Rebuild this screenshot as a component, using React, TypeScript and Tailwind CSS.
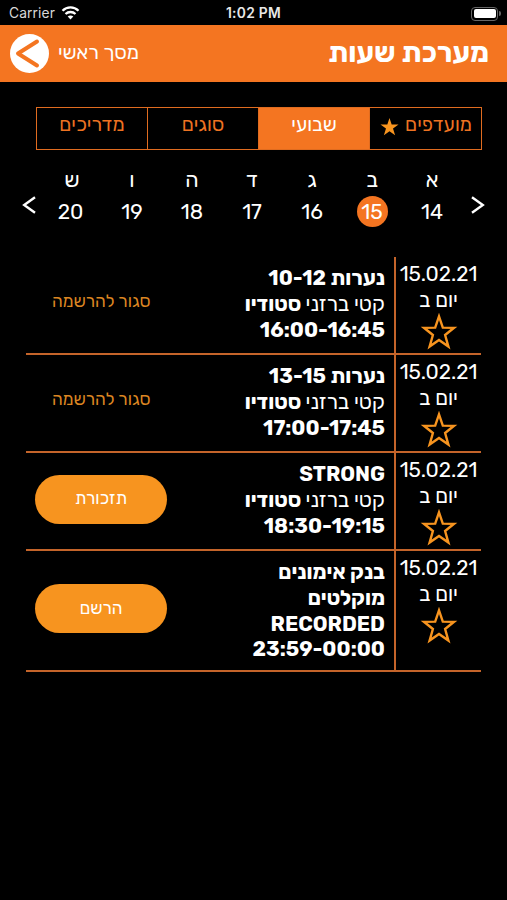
import React from "react";

const days = [
  ["א", "14"],
  ["ב", "15"],
  ["ג", "16"],
  ["ד", "17"],
  ["ה", "18"],
  ["ו", "19"],
  ["ש", "20"],
];

type Lesson = {
  title: string[];
  trainer: boolean;
  time: string;
  height: string;
  action: "closed" | "remind" | "join";
};

const lessons: Lesson[] = [
  { title: ["נערות 10-12"], trainer: true, time: "16:00-16:45", height: "h-[98px]", action: "closed" },
  { title: ["נערות 13-15"], trainer: true, time: "17:00-17:45", height: "h-[98px]", action: "closed" },
  { title: ["STRONG"], trainer: true, time: "18:30-19:15", height: "h-[98px]", action: "remind" },
  {
    title: ["בנק אימונים", "מוקלטים", "RECORDED"],
    trainer: false,
    time: "23:59-00:00",
    height: "h-[121px]",
    action: "join",
  },
];

function OutlineStar() {
  return (
    <svg width="38" height="38" viewBox="0 0 38 38" fill="none" className="mt-[1px]">
      <path
        d="M19 3.4 L22.8 14.6 L34 14.8 L25.1 22 L28.4 33.6 L19 27 L9.6 33.6 L12.9 22 L4 14.8 L15.2 14.6 Z"
        stroke="#f7941f"
        strokeWidth="2.4"
      />
    </svg>
  );
}

function Chevron({ flip }: { flip?: boolean }) {
  return (
    <svg width="14" height="18" viewBox="0 0 14 18" fill="none" className={flip ? "-scale-x-100" : ""}>
      <path d="M13 1.2 L2.2 9 L13 16.8" stroke="#fff" strokeWidth="2.4" />
    </svg>
  );
}

function Row({ lesson }: { lesson: Lesson }) {
  return (
    <div className={`flex border-b-2 border-[#c4642a] ${lesson.height}`}>
      <div className="flex w-[85px] shrink-0 flex-col items-center pt-[4px] text-[20.8px] text-white">
        <div dir="ltr" className="h-[26px] leading-[26px]">15.02.21</div>
        <div className="h-[25px] text-[20.8px] leading-[26px]">יום ב</div>
        <OutlineStar />
      </div>
      <div className="-mb-[2px] w-[2px] shrink-0 bg-[#c4642a]" />
      <div className="flex w-[168px] shrink-0 flex-col items-start pt-[9px] pr-[9px] text-[20.8px] leading-[25.8px] font-bold whitespace-nowrap text-white">
        {lesson.title.map((t) => (
          <div key={t}>{t}</div>
        ))}
        {lesson.trainer && (
          <div>
            <span className="font-normal">קטי ברזני</span> סטודיו
          </div>
        )}
        <div dir="ltr">{lesson.time}</div>
      </div>
      <div className="flex flex-1 items-center justify-end pb-[4px]">
        {lesson.action === "closed" ? (
          <div className="ml-[26px] pb-[3px] text-[17.3px] whitespace-nowrap text-[#dc8622]">סגור להרשמה</div>
        ) : (
          <button className="ml-[9px] flex h-[49px] w-[132px] items-center justify-center rounded-full bg-[#f7941f] text-[17.2px] text-white">
            {lesson.action === "remind" ? "תזכורת" : "הרשם"}
          </button>
        )}
      </div>
    </div>
  );
}

export default function App() {
  return (
    <div dir="rtl" className="h-[900px] w-[507px] overflow-hidden bg-black font-['Rubik','Open_Sans','Liberation_Sans',sans-serif]">
      <div dir="ltr" className="grid h-[25px] grid-cols-3 items-center pt-[2px] font-['Inter',sans-serif] text-[13.8px] leading-none text-[#d8d8d8]">
        <div className="flex items-center gap-[6px] pt-[1px] pl-[9px]">
          <span className="tracking-[0.1px]">Carrier</span>
          <svg width="19" height="14" viewBox="0 0 18 14" fill="none" stroke="#fff" strokeWidth="2.3" className="-mt-[2px]">
            <path d="M1 4.8 C5.5 0.3 12.5 0.3 17 4.8" />
            <path d="M4 8 C6.8 5.3 11.2 5.3 14 8" />
            <path d="M9 13.5 L6.2 10.6 C7.8 9.2 10.2 9.2 11.8 10.6 Z" fill="#fff" stroke="none" />
          </svg>
        </div>
        <div className="pt-[1px] text-center font-semibold tracking-[0.3px] text-[#e8e8e8]">1:02 PM</div>
        <div className="flex items-center justify-end pr-[6px]">
          <div className="h-[14px] w-[27px] rounded-[4px] border border-[#666] p-[1.5px]">
            <div className="h-full rounded-[2px] bg-white" />
          </div>
          <div className="ml-[1px] h-[5px] w-[2px] rounded-r-full bg-[#666]" />
        </div>
      </div>

      <header className="flex h-[57px] items-center justify-between bg-[#f47521] pr-[18px] pl-[10px] text-white">
        <h1 className="text-[28.2px] leading-none font-bold">מערכת שעות</h1>
        <div className="flex items-center gap-[9px]">
          <span className="pb-[2px] text-[19.7px] leading-none">מסך ראשי</span>
          <svg width="39" height="39" viewBox="0 0 39 39" fill="none">
            <circle cx="19.5" cy="19.5" r="19.5" fill="#fff" />
            <path d="M27 7.5 L8 19.5 L27 31.5" stroke="#f47521" strokeWidth="4" strokeLinecap="round" strokeLinejoin="round" />
          </svg>
        </div>
      </header>

      <nav className="mt-[25px] mr-[25px] flex h-[43px] w-[446px] divide-x divide-[#e06c20] border border-[#e06c20] text-[19.6px] leading-[33px] text-[#ee7322]">
        <div className="flex flex-1 justify-center gap-[6px] pl-px">
          <span>מועדפים</span>
          <svg width="19" height="20" viewBox="0 0 20 20" className="mt-[9px]">
            <path d="M10 .5 L12.3 7.4 L19.5 7.4 L13.7 11.7 L15.9 18.7 L10 14.5 L4.1 18.7 L6.3 11.7 L.5 7.4 L7.7 7.4 Z" fill="#f7941f" />
          </svg>
        </div>
        <div className="flex-1 bg-[#f47521] text-center text-white">שבועי</div>
        <div className="flex-1 text-center">סוגים</div>
        <div className="flex-1 text-center">מדריכים</div>
      </nav>

      <div className="mt-[14px] flex h-[68px] items-start px-[22px] text-white">
        <div className="w-[15px] pt-[32px]"><Chevron flip /></div>
        <div className="mr-[8px] flex w-[420px]">
          {days.map(([letter, date]) => (
            <div key={date} className="flex w-[60px] flex-col items-center">
              <div className="h-[32px] text-[21.5px] leading-[31px]">{letter}</div>
              <div
                className={`flex h-[31px] w-[31px] items-center justify-center rounded-full text-[21px] ${
                  date === "15" ? "bg-[#f47521]" : date === "20" ? "mr-[3px]" : ""
                }`}
              >
                {date}
              </div>
            </div>
          ))}
        </div>
        <div className="mr-auto pt-[32px]"><Chevron /></div>
      </div>

      <main className="mt-[25px] mr-[26px] w-[455px]">
        {lessons.map((l) => (
          <Row key={l.time} lesson={l} />
        ))}
      </main>
    </div>
  );
}
